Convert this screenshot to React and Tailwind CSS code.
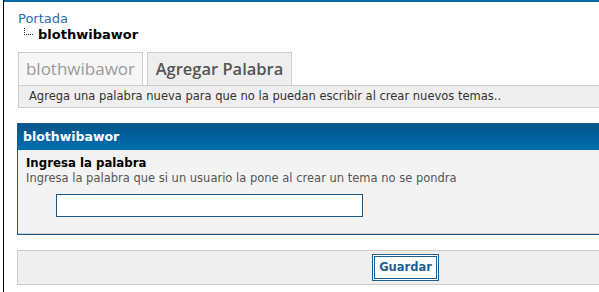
export default function App() {
  const v = { fontFamily: '"DejaVu Sans", Verdana, sans-serif' };
  const o = { fontFamily: '"Open Sans", "Segoe UI", sans-serif' };
  return (
    <div className="w-[599px] h-[292px] overflow-hidden bg-white" style={v}>
      <div className="ml-[3px] border-l border-black h-full">
        <div className="h-[2px] bg-[#0567a8]" />
        <div className="pl-[13px] w-[790px]">
          <div className="pt-[9px] pl-[1px]">
            <div className="text-[13px] leading-[16px] text-[#2a6cae]">Portada</div>
            <div className="flex items-start h-[16px]">
              <div className="ml-[6px] mt-[1px] w-[9px] h-[7px] border-l border-b border-dotted border-[#222]" />
              <div className="ml-[5px] text-[13px] leading-[16px] font-bold text-black">blothwibawor</div>
            </div>
          </div>
          <div className="mt-[9px] pl-[1px] flex items-end gap-[4px]" style={o}>
            <div className="h-[33px] w-[125px] border border-b-0 border-[#cccccc] bg-[#f6f6f6] flex items-center justify-center text-[17px] text-[#9a9a9a]">
              blothwibawor
            </div>
            <div className="h-[33px] w-[145px] border border-b-0 border-[#cccccc] bg-[#eeeeee] flex items-center justify-center text-[16.5px] font-semibold text-[#555555]">
              Agregar Palabra
            </div>
          </div>
          <div className="ml-[1px] h-[23px] border border-[#cccccc] bg-[#eeeeee] flex items-center pl-[10px] text-[11.5px] text-[#333333]">
            Agrega una palabra nueva para que no la puedan escribir al crear nuevos temas..
          </div>
          <div className="mt-[15px] border border-[#1a5c8e] bg-[#f3f3f3]">
            <div className="h-[26px] bg-gradient-to-b from-[#03568b] to-[#006eb1] flex items-center pl-[5px] text-[12.5px] font-bold text-white">
              blothwibawor
            </div>
            <div className="pl-[8px] pt-[6px] pb-[16px] border-b border-[#cccccc]">
              <div className="text-[11.75px] leading-[15px] font-bold text-black">Ingresa la palabra</div>
              <div className="text-[11.5px] leading-[14px] text-[#555555]">
                Ingresa la palabra que si un usuario la pone al crear un tema no se pondra
              </div>
              <div className="mt-[9px] ml-[30px] w-[307px] h-[23px] border border-[#1a5a8a] bg-white" />
            </div>
          </div>
          <div className="mt-[15px] h-[35px] border border-[#cccccc] bg-[#efefef] flex items-center justify-center">
            <button className="h-[27px] px-[4px] border-[3px] border-double border-[#1d5f93] bg-white text-[11.5px] font-bold text-[#1d5f93]">
              Guardar
            </button>
          </div>
        </div>
      </div>
    </div>
  );
}
